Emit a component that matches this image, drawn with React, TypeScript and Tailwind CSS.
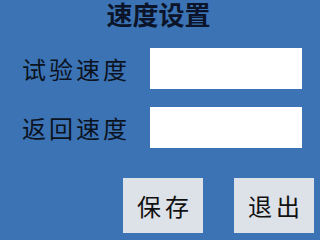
import React from 'react';

const cjk = { fontFamily: '"Noto Sans CJK SC", "Noto Sans", sans-serif' };

function SpeedRow({ label }: { label: string }) {
  return (
    <div className="flex items-center h-[41px]">
      <span className="flex-none w-[150px] pl-[22px] text-[24px] leading-none tracking-[3px] text-[#0b1220] whitespace-nowrap">
        {label}
      </span>
      <input type="text" className="flex-none w-[152px] h-[41px] bg-white outline-none border-0" />
    </div>
  );
}

export default function App() {
  return (
    <div className="w-[320px] h-[240px] bg-[#3b73b5] flex flex-col overflow-hidden" style={cjk}>
      <h1 className="text-center text-[26px] leading-[28px] font-bold text-[#0b1428] pr-[3px]">
        速度设置
      </h1>
      <div className="mt-[20px] flex flex-col gap-[18px]">
        <SpeedRow label="试验速度" />
        <SpeedRow label="返回速度" />
      </div>
      <div className="mt-[30px] flex justify-end gap-[31px] pr-[6px]">
        <button className="w-[80px] h-[55px] bg-[#dde1e8] text-[24px] tracking-[4px] text-[#111] pl-[4px]">
          保存
        </button>
        <button className="w-[80px] h-[55px] bg-[#dde1e8] text-[24px] tracking-[4px] text-[#111] pl-[4px]">
          退出
        </button>
      </div>
    </div>
  );
}
